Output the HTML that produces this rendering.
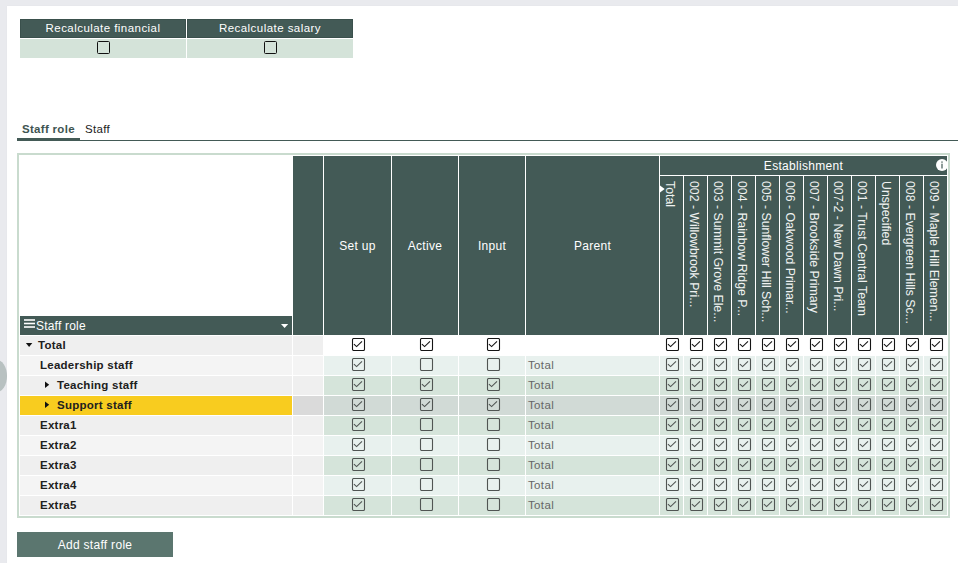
<!DOCTYPE html>
<html><head><meta charset="utf-8"><style>
*{box-sizing:border-box;margin:0;padding:0}
html,body{width:958px;height:563px;overflow:hidden;background:#e9eaee;font-family:"Liberation Sans",sans-serif}
.abs{position:absolute}
.page{position:absolute;left:7px;top:6px;width:951px;height:557px;background:#fff;box-shadow:0 0 1px rgba(0,0,0,0.06)}
.hd{position:absolute;background:#435a56;color:#fff;font-size:12px;letter-spacing:0.3px;text-align:center;white-space:nowrap}
.cb{position:absolute;width:13px;height:13px;border:1px solid #111;border-radius:1.5px}
.cbk{position:absolute;width:15px;height:13px}
.cell{position:absolute}
.lbl{position:absolute;font-size:11.5px;letter-spacing:0.25px;font-weight:bold;color:#202020;white-space:nowrap}
.vt{position:absolute;color:#f0f2f1;font-size:12.3px;white-space:nowrap;transform-origin:0 0;transform:rotate(90deg)}
</style></head><body>
<div class="abs" style="left:-13px;top:360px;width:20px;height:32px;border-radius:50%;background:#b8c1c1"></div>
<div class="page"></div>

<div class="hd" style="left:20px;top:19px;width:166px;height:19px;line-height:16px;font-size:11.5px;letter-spacing:0.45px;border:1px solid #3a504c">Recalculate financial</div>
<div class="hd" style="left:187px;top:19px;width:166px;height:19px;line-height:16px;font-size:11.5px;letter-spacing:0.45px;border:1px solid #3a504c">Recalculate salary</div>
<div class="cell" style="left:20px;top:39px;width:166px;height:19px;background:#d4e3d9"></div>
<div class="cell" style="left:187px;top:39px;width:166px;height:19px;background:#d4e3d9"></div>
<div class="cb" style="left:97px;top:41px"></div>
<div class="cb" style="left:264px;top:41px"></div>
<div class="abs" style="left:22px;top:123px;font-size:11.5px;letter-spacing:0.3px;font-weight:bold;color:#3e5451;white-space:nowrap">Staff role</div>
<div class="abs" style="left:85px;top:123px;font-size:11.5px;letter-spacing:0.3px;color:#222;white-space:nowrap">Staff</div>
<div class="abs" style="left:17px;top:140px;width:941px;height:1px;background:#435a56"></div>
<div class="abs" style="left:17px;top:138px;width:63px;height:3px;background:#435a56"></div>
<div class="abs" style="left:17px;top:153px;width:933px;height:365px;border:2px solid #c9dbce"></div>
<div class="hd" style="left:20px;top:316px;width:272px;height:19px;text-align:left"></div>
<svg class="abs" style="left:24px;top:318px" width="11" height="11"><rect x="0" y="1.2" width="11" height="1.6" fill="#fff"/><rect x="0" y="4.7" width="11" height="1.6" fill="#fff"/><rect x="0" y="8.2" width="11" height="1.6" fill="#fff"/></svg>
<div class="abs" style="left:36px;top:319px;font-size:12px;letter-spacing:0.2px;color:#fff;white-space:nowrap">Staff role</div>
<svg class="abs" style="left:281px;top:324px" width="8" height="5"><path d="M0 0 L7.2 0 L3.6 4 Z" fill="#fff"/></svg>
<div class="hd" style="left:293px;top:156px;width:30px;height:179px;line-height:180px"></div>
<div class="hd" style="left:324px;top:156px;width:67px;height:179px;line-height:180px">Set up</div>
<div class="hd" style="left:392px;top:156px;width:66px;height:179px;line-height:180px">Active</div>
<div class="hd" style="left:459px;top:156px;width:66px;height:179px;line-height:180px">Input</div>
<div class="hd" style="left:526px;top:156px;width:133px;height:179px;line-height:180px">Parent</div>
<div class="hd" style="left:660px;top:156px;width:287px;height:19px;line-height:21px">Establishment</div>
<div class="abs" style="left:660px;top:156px;width:287px;height:19px;overflow:hidden"><svg style="position:absolute;left:276px;top:3px" width="12" height="12" viewBox="0 0 12 12"><circle cx="6" cy="6" r="6" fill="#fff"/><rect x="5.4" y="2.4" width="1.2" height="1.4" fill="#435a56"/><rect x="5.4" y="4.7" width="1.2" height="4.8" fill="#435a56"/></svg></div>
<div class="hd" style="left:660px;top:176px;width:23px;height:159px"></div>
<div class="vt" style="left:676.5px;top:181px">Total</div>
<div class="hd" style="left:684px;top:176px;width:23px;height:159px"></div>
<div class="vt" style="left:700.5px;top:181px">002 - Willowbrook Pri...</div>
<div class="hd" style="left:708px;top:176px;width:23px;height:159px"></div>
<div class="vt" style="left:724.5px;top:181px">003 - Summit Grove Ele...</div>
<div class="hd" style="left:732px;top:176px;width:23px;height:159px"></div>
<div class="vt" style="left:748.5px;top:181px">004 - Rainbow Ridge P...</div>
<div class="hd" style="left:756px;top:176px;width:23px;height:159px"></div>
<div class="vt" style="left:772.5px;top:181px">005 - Sunflower Hill Sch...</div>
<div class="hd" style="left:780px;top:176px;width:23px;height:159px"></div>
<div class="vt" style="left:796.5px;top:181px">006 - Oakwood Primar...</div>
<div class="hd" style="left:804px;top:176px;width:23px;height:159px"></div>
<div class="vt" style="left:820.5px;top:181px">007 - Brookside Primary</div>
<div class="hd" style="left:828px;top:176px;width:23px;height:159px"></div>
<div class="vt" style="left:844.5px;top:181px">007-2 - New Dawn Pri...</div>
<div class="hd" style="left:852px;top:176px;width:23px;height:159px"></div>
<div class="vt" style="left:868.5px;top:181px">001 - Trust Central Team</div>
<div class="hd" style="left:876px;top:176px;width:23px;height:159px"></div>
<div class="vt" style="left:892.5px;top:181px">Unspecified</div>
<div class="hd" style="left:900px;top:176px;width:23px;height:159px"></div>
<div class="vt" style="left:916.5px;top:181px">008 - Evergreen Hills Sc...</div>
<div class="hd" style="left:924px;top:176px;width:23px;height:159px"></div>
<div class="vt" style="left:940.5px;top:181px">009 - Maple Hill Elemen...</div>
<svg class="abs" style="left:660px;top:185px" width="6" height="8"><path d="M0 0.6 L4.7 4 L0 7.4 Z" fill="#fff"/></svg>
<div class="cell" style="left:20px;top:336px;width:272px;height:19px;background:#efefef"></div>
<div class="cell" style="left:293px;top:336px;width:30px;height:19px;background:#efefef"></div>
<div class="cell" style="left:324px;top:336px;width:67px;height:19px;background:#fff"></div>
<div class="cell" style="left:392px;top:336px;width:66px;height:19px;background:#fff"></div>
<div class="cell" style="left:459px;top:336px;width:66px;height:19px;background:#fff"></div>
<div class="cell" style="left:526px;top:336px;width:133px;height:19px;background:#fff"></div>
<div class="cell" style="left:660px;top:336px;width:23px;height:19px;background:#fff"></div>
<div class="cell" style="left:684px;top:336px;width:23px;height:19px;background:#fff"></div>
<div class="cell" style="left:708px;top:336px;width:23px;height:19px;background:#fff"></div>
<div class="cell" style="left:732px;top:336px;width:23px;height:19px;background:#fff"></div>
<div class="cell" style="left:756px;top:336px;width:23px;height:19px;background:#fff"></div>
<div class="cell" style="left:780px;top:336px;width:23px;height:19px;background:#fff"></div>
<div class="cell" style="left:804px;top:336px;width:23px;height:19px;background:#fff"></div>
<div class="cell" style="left:828px;top:336px;width:23px;height:19px;background:#fff"></div>
<div class="cell" style="left:852px;top:336px;width:23px;height:19px;background:#fff"></div>
<div class="cell" style="left:876px;top:336px;width:23px;height:19px;background:#fff"></div>
<div class="cell" style="left:900px;top:336px;width:23px;height:19px;background:#fff"></div>
<div class="cell" style="left:924px;top:336px;width:23px;height:19px;background:#fff"></div>
<svg class="abs" style="left:25px;top:342px" width="8" height="6"><path d="M0.9 0.9 L7.3 0.9 L4.1 5.1 Z" fill="#111"/></svg>
<div class="lbl" style="left:38px;top:339px">Total</div>
<svg class="cbk" style="left:351px;top:338px" width="15" height="13" viewBox="0 0 15 13"><rect x="1.5" y="0.5" width="12" height="12" rx="1.2" fill="none" stroke="#141414" stroke-width="1.1"/><path d="M2.9 6.2 L5.6 8.6 L11 3.4" fill="none" stroke="#141414" stroke-width="1.1"/></svg>
<svg class="cbk" style="left:419px;top:338px" width="15" height="13" viewBox="0 0 15 13"><rect x="1.5" y="0.5" width="12" height="12" rx="1.2" fill="none" stroke="#141414" stroke-width="1.1"/><path d="M2.9 6.2 L5.6 8.6 L11 3.4" fill="none" stroke="#141414" stroke-width="1.1"/></svg>
<svg class="cbk" style="left:486px;top:338px" width="15" height="13" viewBox="0 0 15 13"><rect x="1.5" y="0.5" width="12" height="12" rx="1.2" fill="none" stroke="#141414" stroke-width="1.1"/><path d="M2.9 6.2 L5.6 8.6 L11 3.4" fill="none" stroke="#141414" stroke-width="1.1"/></svg>
<svg class="cbk" style="left:665px;top:338px" width="15" height="13" viewBox="0 0 15 13"><rect x="1.5" y="0.5" width="12" height="12" rx="1.2" fill="none" stroke="#141414" stroke-width="1.1"/><path d="M2.9 6.2 L5.6 8.6 L11 3.4" fill="none" stroke="#141414" stroke-width="1.1"/></svg>
<svg class="cbk" style="left:689px;top:338px" width="15" height="13" viewBox="0 0 15 13"><rect x="1.5" y="0.5" width="12" height="12" rx="1.2" fill="none" stroke="#141414" stroke-width="1.1"/><path d="M2.9 6.2 L5.6 8.6 L11 3.4" fill="none" stroke="#141414" stroke-width="1.1"/></svg>
<svg class="cbk" style="left:713px;top:338px" width="15" height="13" viewBox="0 0 15 13"><rect x="1.5" y="0.5" width="12" height="12" rx="1.2" fill="none" stroke="#141414" stroke-width="1.1"/><path d="M2.9 6.2 L5.6 8.6 L11 3.4" fill="none" stroke="#141414" stroke-width="1.1"/></svg>
<svg class="cbk" style="left:737px;top:338px" width="15" height="13" viewBox="0 0 15 13"><rect x="1.5" y="0.5" width="12" height="12" rx="1.2" fill="none" stroke="#141414" stroke-width="1.1"/><path d="M2.9 6.2 L5.6 8.6 L11 3.4" fill="none" stroke="#141414" stroke-width="1.1"/></svg>
<svg class="cbk" style="left:761px;top:338px" width="15" height="13" viewBox="0 0 15 13"><rect x="1.5" y="0.5" width="12" height="12" rx="1.2" fill="none" stroke="#141414" stroke-width="1.1"/><path d="M2.9 6.2 L5.6 8.6 L11 3.4" fill="none" stroke="#141414" stroke-width="1.1"/></svg>
<svg class="cbk" style="left:785px;top:338px" width="15" height="13" viewBox="0 0 15 13"><rect x="1.5" y="0.5" width="12" height="12" rx="1.2" fill="none" stroke="#141414" stroke-width="1.1"/><path d="M2.9 6.2 L5.6 8.6 L11 3.4" fill="none" stroke="#141414" stroke-width="1.1"/></svg>
<svg class="cbk" style="left:809px;top:338px" width="15" height="13" viewBox="0 0 15 13"><rect x="1.5" y="0.5" width="12" height="12" rx="1.2" fill="none" stroke="#141414" stroke-width="1.1"/><path d="M2.9 6.2 L5.6 8.6 L11 3.4" fill="none" stroke="#141414" stroke-width="1.1"/></svg>
<svg class="cbk" style="left:833px;top:338px" width="15" height="13" viewBox="0 0 15 13"><rect x="1.5" y="0.5" width="12" height="12" rx="1.2" fill="none" stroke="#141414" stroke-width="1.1"/><path d="M2.9 6.2 L5.6 8.6 L11 3.4" fill="none" stroke="#141414" stroke-width="1.1"/></svg>
<svg class="cbk" style="left:857px;top:338px" width="15" height="13" viewBox="0 0 15 13"><rect x="1.5" y="0.5" width="12" height="12" rx="1.2" fill="none" stroke="#141414" stroke-width="1.1"/><path d="M2.9 6.2 L5.6 8.6 L11 3.4" fill="none" stroke="#141414" stroke-width="1.1"/></svg>
<svg class="cbk" style="left:881px;top:338px" width="15" height="13" viewBox="0 0 15 13"><rect x="1.5" y="0.5" width="12" height="12" rx="1.2" fill="none" stroke="#141414" stroke-width="1.1"/><path d="M2.9 6.2 L5.6 8.6 L11 3.4" fill="none" stroke="#141414" stroke-width="1.1"/></svg>
<svg class="cbk" style="left:905px;top:338px" width="15" height="13" viewBox="0 0 15 13"><rect x="1.5" y="0.5" width="12" height="12" rx="1.2" fill="none" stroke="#141414" stroke-width="1.1"/><path d="M2.9 6.2 L5.6 8.6 L11 3.4" fill="none" stroke="#141414" stroke-width="1.1"/></svg>
<svg class="cbk" style="left:929px;top:338px" width="15" height="13" viewBox="0 0 15 13"><rect x="1.5" y="0.5" width="12" height="12" rx="1.2" fill="none" stroke="#141414" stroke-width="1.1"/><path d="M2.9 6.2 L5.6 8.6 L11 3.4" fill="none" stroke="#141414" stroke-width="1.1"/></svg>
<div class="cell" style="left:20px;top:356px;width:272px;height:19px;background:#f4f4f4"></div>
<div class="cell" style="left:293px;top:356px;width:30px;height:19px;background:#f4f4f4"></div>
<div class="cell" style="left:324px;top:356px;width:67px;height:19px;background:#e8f1ee"></div>
<div class="cell" style="left:392px;top:356px;width:66px;height:19px;background:#e8f1ee"></div>
<div class="cell" style="left:459px;top:356px;width:66px;height:19px;background:#e8f1ee"></div>
<div class="cell" style="left:526px;top:356px;width:133px;height:19px;background:#e8f1ee"></div>
<div class="cell" style="left:660px;top:356px;width:23px;height:19px;background:#e8f1ee"></div>
<div class="cell" style="left:684px;top:356px;width:23px;height:19px;background:#e8f1ee"></div>
<div class="cell" style="left:708px;top:356px;width:23px;height:19px;background:#e8f1ee"></div>
<div class="cell" style="left:732px;top:356px;width:23px;height:19px;background:#e8f1ee"></div>
<div class="cell" style="left:756px;top:356px;width:23px;height:19px;background:#e8f1ee"></div>
<div class="cell" style="left:780px;top:356px;width:23px;height:19px;background:#e8f1ee"></div>
<div class="cell" style="left:804px;top:356px;width:23px;height:19px;background:#e8f1ee"></div>
<div class="cell" style="left:828px;top:356px;width:23px;height:19px;background:#e8f1ee"></div>
<div class="cell" style="left:852px;top:356px;width:23px;height:19px;background:#e8f1ee"></div>
<div class="cell" style="left:876px;top:356px;width:23px;height:19px;background:#e8f1ee"></div>
<div class="cell" style="left:900px;top:356px;width:23px;height:19px;background:#e8f1ee"></div>
<div class="cell" style="left:924px;top:356px;width:23px;height:19px;background:#e8f1ee"></div>
<div class="lbl" style="left:40px;top:359px">Leadership staff</div>
<svg class="cbk" style="left:351px;top:358px" width="15" height="13" viewBox="0 0 15 13"><rect x="1.5" y="0.5" width="12" height="12" rx="1.2" fill="none" stroke="#505553" stroke-width="1.1"/><path d="M2.9 6.2 L5.6 8.6 L11 3.4" fill="none" stroke="#505553" stroke-width="1.1"/></svg>
<svg class="cbk" style="left:419px;top:358px" width="15" height="13" viewBox="0 0 15 13"><rect x="1.5" y="0.5" width="12" height="12" rx="1.2" fill="none" stroke="#505553" stroke-width="1.1"/></svg>
<svg class="cbk" style="left:486px;top:358px" width="15" height="13" viewBox="0 0 15 13"><rect x="1.5" y="0.5" width="12" height="12" rx="1.2" fill="none" stroke="#505553" stroke-width="1.1"/></svg>
<div class="abs" style="left:528px;top:359.0px;font-size:11.5px;letter-spacing:0.35px;color:#666;white-space:nowrap">Total</div>
<svg class="cbk" style="left:665px;top:358px" width="15" height="13" viewBox="0 0 15 13"><rect x="1.5" y="0.5" width="12" height="12" rx="1.2" fill="none" stroke="#505553" stroke-width="1.1"/><path d="M2.9 6.2 L5.6 8.6 L11 3.4" fill="none" stroke="#505553" stroke-width="1.1"/></svg>
<svg class="cbk" style="left:689px;top:358px" width="15" height="13" viewBox="0 0 15 13"><rect x="1.5" y="0.5" width="12" height="12" rx="1.2" fill="none" stroke="#505553" stroke-width="1.1"/><path d="M2.9 6.2 L5.6 8.6 L11 3.4" fill="none" stroke="#505553" stroke-width="1.1"/></svg>
<svg class="cbk" style="left:713px;top:358px" width="15" height="13" viewBox="0 0 15 13"><rect x="1.5" y="0.5" width="12" height="12" rx="1.2" fill="none" stroke="#505553" stroke-width="1.1"/><path d="M2.9 6.2 L5.6 8.6 L11 3.4" fill="none" stroke="#505553" stroke-width="1.1"/></svg>
<svg class="cbk" style="left:737px;top:358px" width="15" height="13" viewBox="0 0 15 13"><rect x="1.5" y="0.5" width="12" height="12" rx="1.2" fill="none" stroke="#505553" stroke-width="1.1"/><path d="M2.9 6.2 L5.6 8.6 L11 3.4" fill="none" stroke="#505553" stroke-width="1.1"/></svg>
<svg class="cbk" style="left:761px;top:358px" width="15" height="13" viewBox="0 0 15 13"><rect x="1.5" y="0.5" width="12" height="12" rx="1.2" fill="none" stroke="#505553" stroke-width="1.1"/><path d="M2.9 6.2 L5.6 8.6 L11 3.4" fill="none" stroke="#505553" stroke-width="1.1"/></svg>
<svg class="cbk" style="left:785px;top:358px" width="15" height="13" viewBox="0 0 15 13"><rect x="1.5" y="0.5" width="12" height="12" rx="1.2" fill="none" stroke="#505553" stroke-width="1.1"/><path d="M2.9 6.2 L5.6 8.6 L11 3.4" fill="none" stroke="#505553" stroke-width="1.1"/></svg>
<svg class="cbk" style="left:809px;top:358px" width="15" height="13" viewBox="0 0 15 13"><rect x="1.5" y="0.5" width="12" height="12" rx="1.2" fill="none" stroke="#505553" stroke-width="1.1"/><path d="M2.9 6.2 L5.6 8.6 L11 3.4" fill="none" stroke="#505553" stroke-width="1.1"/></svg>
<svg class="cbk" style="left:833px;top:358px" width="15" height="13" viewBox="0 0 15 13"><rect x="1.5" y="0.5" width="12" height="12" rx="1.2" fill="none" stroke="#505553" stroke-width="1.1"/><path d="M2.9 6.2 L5.6 8.6 L11 3.4" fill="none" stroke="#505553" stroke-width="1.1"/></svg>
<svg class="cbk" style="left:857px;top:358px" width="15" height="13" viewBox="0 0 15 13"><rect x="1.5" y="0.5" width="12" height="12" rx="1.2" fill="none" stroke="#505553" stroke-width="1.1"/><path d="M2.9 6.2 L5.6 8.6 L11 3.4" fill="none" stroke="#505553" stroke-width="1.1"/></svg>
<svg class="cbk" style="left:881px;top:358px" width="15" height="13" viewBox="0 0 15 13"><rect x="1.5" y="0.5" width="12" height="12" rx="1.2" fill="none" stroke="#505553" stroke-width="1.1"/><path d="M2.9 6.2 L5.6 8.6 L11 3.4" fill="none" stroke="#505553" stroke-width="1.1"/></svg>
<svg class="cbk" style="left:905px;top:358px" width="15" height="13" viewBox="0 0 15 13"><rect x="1.5" y="0.5" width="12" height="12" rx="1.2" fill="none" stroke="#505553" stroke-width="1.1"/><path d="M2.9 6.2 L5.6 8.6 L11 3.4" fill="none" stroke="#505553" stroke-width="1.1"/></svg>
<svg class="cbk" style="left:929px;top:358px" width="15" height="13" viewBox="0 0 15 13"><rect x="1.5" y="0.5" width="12" height="12" rx="1.2" fill="none" stroke="#505553" stroke-width="1.1"/><path d="M2.9 6.2 L5.6 8.6 L11 3.4" fill="none" stroke="#505553" stroke-width="1.1"/></svg>
<div class="cell" style="left:20px;top:376px;width:272px;height:19px;background:#efefef"></div>
<div class="cell" style="left:293px;top:376px;width:30px;height:19px;background:#efefef"></div>
<div class="cell" style="left:324px;top:376px;width:67px;height:19px;background:#d5e4da"></div>
<div class="cell" style="left:392px;top:376px;width:66px;height:19px;background:#d5e4da"></div>
<div class="cell" style="left:459px;top:376px;width:66px;height:19px;background:#d5e4da"></div>
<div class="cell" style="left:526px;top:376px;width:133px;height:19px;background:#d5e4da"></div>
<div class="cell" style="left:660px;top:376px;width:23px;height:19px;background:#d5e4da"></div>
<div class="cell" style="left:684px;top:376px;width:23px;height:19px;background:#d5e4da"></div>
<div class="cell" style="left:708px;top:376px;width:23px;height:19px;background:#d5e4da"></div>
<div class="cell" style="left:732px;top:376px;width:23px;height:19px;background:#d5e4da"></div>
<div class="cell" style="left:756px;top:376px;width:23px;height:19px;background:#d5e4da"></div>
<div class="cell" style="left:780px;top:376px;width:23px;height:19px;background:#d5e4da"></div>
<div class="cell" style="left:804px;top:376px;width:23px;height:19px;background:#d5e4da"></div>
<div class="cell" style="left:828px;top:376px;width:23px;height:19px;background:#d5e4da"></div>
<div class="cell" style="left:852px;top:376px;width:23px;height:19px;background:#d5e4da"></div>
<div class="cell" style="left:876px;top:376px;width:23px;height:19px;background:#d5e4da"></div>
<div class="cell" style="left:900px;top:376px;width:23px;height:19px;background:#d5e4da"></div>
<div class="cell" style="left:924px;top:376px;width:23px;height:19px;background:#d5e4da"></div>
<svg class="abs" style="left:44px;top:380px" width="7" height="8"><path d="M1 1.5 L5.2 4.75 L1 8 Z" fill="#111"/></svg>
<div class="lbl" style="left:57px;top:379px">Teaching staff</div>
<svg class="cbk" style="left:351px;top:378px" width="15" height="13" viewBox="0 0 15 13"><rect x="1.5" y="0.5" width="12" height="12" rx="1.2" fill="none" stroke="#505553" stroke-width="1.1"/><path d="M2.9 6.2 L5.6 8.6 L11 3.4" fill="none" stroke="#505553" stroke-width="1.1"/></svg>
<svg class="cbk" style="left:419px;top:378px" width="15" height="13" viewBox="0 0 15 13"><rect x="1.5" y="0.5" width="12" height="12" rx="1.2" fill="none" stroke="#505553" stroke-width="1.1"/><path d="M2.9 6.2 L5.6 8.6 L11 3.4" fill="none" stroke="#505553" stroke-width="1.1"/></svg>
<svg class="cbk" style="left:486px;top:378px" width="15" height="13" viewBox="0 0 15 13"><rect x="1.5" y="0.5" width="12" height="12" rx="1.2" fill="none" stroke="#505553" stroke-width="1.1"/><path d="M2.9 6.2 L5.6 8.6 L11 3.4" fill="none" stroke="#505553" stroke-width="1.1"/></svg>
<div class="abs" style="left:528px;top:379.0px;font-size:11.5px;letter-spacing:0.35px;color:#666;white-space:nowrap">Total</div>
<svg class="cbk" style="left:665px;top:378px" width="15" height="13" viewBox="0 0 15 13"><rect x="1.5" y="0.5" width="12" height="12" rx="1.2" fill="none" stroke="#505553" stroke-width="1.1"/><path d="M2.9 6.2 L5.6 8.6 L11 3.4" fill="none" stroke="#505553" stroke-width="1.1"/></svg>
<svg class="cbk" style="left:689px;top:378px" width="15" height="13" viewBox="0 0 15 13"><rect x="1.5" y="0.5" width="12" height="12" rx="1.2" fill="none" stroke="#505553" stroke-width="1.1"/><path d="M2.9 6.2 L5.6 8.6 L11 3.4" fill="none" stroke="#505553" stroke-width="1.1"/></svg>
<svg class="cbk" style="left:713px;top:378px" width="15" height="13" viewBox="0 0 15 13"><rect x="1.5" y="0.5" width="12" height="12" rx="1.2" fill="none" stroke="#505553" stroke-width="1.1"/><path d="M2.9 6.2 L5.6 8.6 L11 3.4" fill="none" stroke="#505553" stroke-width="1.1"/></svg>
<svg class="cbk" style="left:737px;top:378px" width="15" height="13" viewBox="0 0 15 13"><rect x="1.5" y="0.5" width="12" height="12" rx="1.2" fill="none" stroke="#505553" stroke-width="1.1"/><path d="M2.9 6.2 L5.6 8.6 L11 3.4" fill="none" stroke="#505553" stroke-width="1.1"/></svg>
<svg class="cbk" style="left:761px;top:378px" width="15" height="13" viewBox="0 0 15 13"><rect x="1.5" y="0.5" width="12" height="12" rx="1.2" fill="none" stroke="#505553" stroke-width="1.1"/><path d="M2.9 6.2 L5.6 8.6 L11 3.4" fill="none" stroke="#505553" stroke-width="1.1"/></svg>
<svg class="cbk" style="left:785px;top:378px" width="15" height="13" viewBox="0 0 15 13"><rect x="1.5" y="0.5" width="12" height="12" rx="1.2" fill="none" stroke="#505553" stroke-width="1.1"/><path d="M2.9 6.2 L5.6 8.6 L11 3.4" fill="none" stroke="#505553" stroke-width="1.1"/></svg>
<svg class="cbk" style="left:809px;top:378px" width="15" height="13" viewBox="0 0 15 13"><rect x="1.5" y="0.5" width="12" height="12" rx="1.2" fill="none" stroke="#505553" stroke-width="1.1"/><path d="M2.9 6.2 L5.6 8.6 L11 3.4" fill="none" stroke="#505553" stroke-width="1.1"/></svg>
<svg class="cbk" style="left:833px;top:378px" width="15" height="13" viewBox="0 0 15 13"><rect x="1.5" y="0.5" width="12" height="12" rx="1.2" fill="none" stroke="#505553" stroke-width="1.1"/><path d="M2.9 6.2 L5.6 8.6 L11 3.4" fill="none" stroke="#505553" stroke-width="1.1"/></svg>
<svg class="cbk" style="left:857px;top:378px" width="15" height="13" viewBox="0 0 15 13"><rect x="1.5" y="0.5" width="12" height="12" rx="1.2" fill="none" stroke="#505553" stroke-width="1.1"/><path d="M2.9 6.2 L5.6 8.6 L11 3.4" fill="none" stroke="#505553" stroke-width="1.1"/></svg>
<svg class="cbk" style="left:881px;top:378px" width="15" height="13" viewBox="0 0 15 13"><rect x="1.5" y="0.5" width="12" height="12" rx="1.2" fill="none" stroke="#505553" stroke-width="1.1"/><path d="M2.9 6.2 L5.6 8.6 L11 3.4" fill="none" stroke="#505553" stroke-width="1.1"/></svg>
<svg class="cbk" style="left:905px;top:378px" width="15" height="13" viewBox="0 0 15 13"><rect x="1.5" y="0.5" width="12" height="12" rx="1.2" fill="none" stroke="#505553" stroke-width="1.1"/><path d="M2.9 6.2 L5.6 8.6 L11 3.4" fill="none" stroke="#505553" stroke-width="1.1"/></svg>
<svg class="cbk" style="left:929px;top:378px" width="15" height="13" viewBox="0 0 15 13"><rect x="1.5" y="0.5" width="12" height="12" rx="1.2" fill="none" stroke="#505553" stroke-width="1.1"/><path d="M2.9 6.2 L5.6 8.6 L11 3.4" fill="none" stroke="#505553" stroke-width="1.1"/></svg>
<div class="cell" style="left:20px;top:396px;width:272px;height:19px;background:#f8cc1f"></div>
<div class="cell" style="left:293px;top:396px;width:30px;height:19px;background:#dadada"></div>
<div class="cell" style="left:324px;top:396px;width:67px;height:19px;background:#d1dad6"></div>
<div class="cell" style="left:392px;top:396px;width:66px;height:19px;background:#d1dad6"></div>
<div class="cell" style="left:459px;top:396px;width:66px;height:19px;background:#d1dad6"></div>
<div class="cell" style="left:526px;top:396px;width:133px;height:19px;background:#d1dad6"></div>
<div class="cell" style="left:660px;top:396px;width:23px;height:19px;background:#d1dad6"></div>
<div class="cell" style="left:684px;top:396px;width:23px;height:19px;background:#d1dad6"></div>
<div class="cell" style="left:708px;top:396px;width:23px;height:19px;background:#d1dad6"></div>
<div class="cell" style="left:732px;top:396px;width:23px;height:19px;background:#d1dad6"></div>
<div class="cell" style="left:756px;top:396px;width:23px;height:19px;background:#d1dad6"></div>
<div class="cell" style="left:780px;top:396px;width:23px;height:19px;background:#d1dad6"></div>
<div class="cell" style="left:804px;top:396px;width:23px;height:19px;background:#d1dad6"></div>
<div class="cell" style="left:828px;top:396px;width:23px;height:19px;background:#d1dad6"></div>
<div class="cell" style="left:852px;top:396px;width:23px;height:19px;background:#d1dad6"></div>
<div class="cell" style="left:876px;top:396px;width:23px;height:19px;background:#d1dad6"></div>
<div class="cell" style="left:900px;top:396px;width:23px;height:19px;background:#d1dad6"></div>
<div class="cell" style="left:924px;top:396px;width:23px;height:19px;background:#d1dad6"></div>
<svg class="abs" style="left:44px;top:400px" width="7" height="8"><path d="M1 1.5 L5.2 4.75 L1 8 Z" fill="#111"/></svg>
<div class="lbl" style="left:57px;top:399px">Support staff</div>
<svg class="cbk" style="left:351px;top:398px" width="15" height="13" viewBox="0 0 15 13"><rect x="1.5" y="0.5" width="12" height="12" rx="1.2" fill="none" stroke="#505553" stroke-width="1.1"/><path d="M2.9 6.2 L5.6 8.6 L11 3.4" fill="none" stroke="#505553" stroke-width="1.1"/></svg>
<svg class="cbk" style="left:419px;top:398px" width="15" height="13" viewBox="0 0 15 13"><rect x="1.5" y="0.5" width="12" height="12" rx="1.2" fill="none" stroke="#505553" stroke-width="1.1"/><path d="M2.9 6.2 L5.6 8.6 L11 3.4" fill="none" stroke="#505553" stroke-width="1.1"/></svg>
<svg class="cbk" style="left:486px;top:398px" width="15" height="13" viewBox="0 0 15 13"><rect x="1.5" y="0.5" width="12" height="12" rx="1.2" fill="none" stroke="#505553" stroke-width="1.1"/><path d="M2.9 6.2 L5.6 8.6 L11 3.4" fill="none" stroke="#505553" stroke-width="1.1"/></svg>
<div class="abs" style="left:528px;top:399.0px;font-size:11.5px;letter-spacing:0.35px;color:#666;white-space:nowrap">Total</div>
<svg class="cbk" style="left:665px;top:398px" width="15" height="13" viewBox="0 0 15 13"><rect x="1.5" y="0.5" width="12" height="12" rx="1.2" fill="none" stroke="#505553" stroke-width="1.1"/><path d="M2.9 6.2 L5.6 8.6 L11 3.4" fill="none" stroke="#505553" stroke-width="1.1"/></svg>
<svg class="cbk" style="left:689px;top:398px" width="15" height="13" viewBox="0 0 15 13"><rect x="1.5" y="0.5" width="12" height="12" rx="1.2" fill="none" stroke="#505553" stroke-width="1.1"/><path d="M2.9 6.2 L5.6 8.6 L11 3.4" fill="none" stroke="#505553" stroke-width="1.1"/></svg>
<svg class="cbk" style="left:713px;top:398px" width="15" height="13" viewBox="0 0 15 13"><rect x="1.5" y="0.5" width="12" height="12" rx="1.2" fill="none" stroke="#505553" stroke-width="1.1"/><path d="M2.9 6.2 L5.6 8.6 L11 3.4" fill="none" stroke="#505553" stroke-width="1.1"/></svg>
<svg class="cbk" style="left:737px;top:398px" width="15" height="13" viewBox="0 0 15 13"><rect x="1.5" y="0.5" width="12" height="12" rx="1.2" fill="none" stroke="#505553" stroke-width="1.1"/><path d="M2.9 6.2 L5.6 8.6 L11 3.4" fill="none" stroke="#505553" stroke-width="1.1"/></svg>
<svg class="cbk" style="left:761px;top:398px" width="15" height="13" viewBox="0 0 15 13"><rect x="1.5" y="0.5" width="12" height="12" rx="1.2" fill="none" stroke="#505553" stroke-width="1.1"/><path d="M2.9 6.2 L5.6 8.6 L11 3.4" fill="none" stroke="#505553" stroke-width="1.1"/></svg>
<svg class="cbk" style="left:785px;top:398px" width="15" height="13" viewBox="0 0 15 13"><rect x="1.5" y="0.5" width="12" height="12" rx="1.2" fill="none" stroke="#505553" stroke-width="1.1"/><path d="M2.9 6.2 L5.6 8.6 L11 3.4" fill="none" stroke="#505553" stroke-width="1.1"/></svg>
<svg class="cbk" style="left:809px;top:398px" width="15" height="13" viewBox="0 0 15 13"><rect x="1.5" y="0.5" width="12" height="12" rx="1.2" fill="none" stroke="#505553" stroke-width="1.1"/><path d="M2.9 6.2 L5.6 8.6 L11 3.4" fill="none" stroke="#505553" stroke-width="1.1"/></svg>
<svg class="cbk" style="left:833px;top:398px" width="15" height="13" viewBox="0 0 15 13"><rect x="1.5" y="0.5" width="12" height="12" rx="1.2" fill="none" stroke="#505553" stroke-width="1.1"/><path d="M2.9 6.2 L5.6 8.6 L11 3.4" fill="none" stroke="#505553" stroke-width="1.1"/></svg>
<svg class="cbk" style="left:857px;top:398px" width="15" height="13" viewBox="0 0 15 13"><rect x="1.5" y="0.5" width="12" height="12" rx="1.2" fill="none" stroke="#505553" stroke-width="1.1"/><path d="M2.9 6.2 L5.6 8.6 L11 3.4" fill="none" stroke="#505553" stroke-width="1.1"/></svg>
<svg class="cbk" style="left:881px;top:398px" width="15" height="13" viewBox="0 0 15 13"><rect x="1.5" y="0.5" width="12" height="12" rx="1.2" fill="none" stroke="#505553" stroke-width="1.1"/><path d="M2.9 6.2 L5.6 8.6 L11 3.4" fill="none" stroke="#505553" stroke-width="1.1"/></svg>
<svg class="cbk" style="left:905px;top:398px" width="15" height="13" viewBox="0 0 15 13"><rect x="1.5" y="0.5" width="12" height="12" rx="1.2" fill="none" stroke="#505553" stroke-width="1.1"/><path d="M2.9 6.2 L5.6 8.6 L11 3.4" fill="none" stroke="#505553" stroke-width="1.1"/></svg>
<svg class="cbk" style="left:929px;top:398px" width="15" height="13" viewBox="0 0 15 13"><rect x="1.5" y="0.5" width="12" height="12" rx="1.2" fill="none" stroke="#505553" stroke-width="1.1"/><path d="M2.9 6.2 L5.6 8.6 L11 3.4" fill="none" stroke="#505553" stroke-width="1.1"/></svg>
<div class="cell" style="left:20px;top:416px;width:272px;height:19px;background:#efefef"></div>
<div class="cell" style="left:293px;top:416px;width:30px;height:19px;background:#efefef"></div>
<div class="cell" style="left:324px;top:416px;width:67px;height:19px;background:#d5e4da"></div>
<div class="cell" style="left:392px;top:416px;width:66px;height:19px;background:#d5e4da"></div>
<div class="cell" style="left:459px;top:416px;width:66px;height:19px;background:#d5e4da"></div>
<div class="cell" style="left:526px;top:416px;width:133px;height:19px;background:#d5e4da"></div>
<div class="cell" style="left:660px;top:416px;width:23px;height:19px;background:#d5e4da"></div>
<div class="cell" style="left:684px;top:416px;width:23px;height:19px;background:#d5e4da"></div>
<div class="cell" style="left:708px;top:416px;width:23px;height:19px;background:#d5e4da"></div>
<div class="cell" style="left:732px;top:416px;width:23px;height:19px;background:#d5e4da"></div>
<div class="cell" style="left:756px;top:416px;width:23px;height:19px;background:#d5e4da"></div>
<div class="cell" style="left:780px;top:416px;width:23px;height:19px;background:#d5e4da"></div>
<div class="cell" style="left:804px;top:416px;width:23px;height:19px;background:#d5e4da"></div>
<div class="cell" style="left:828px;top:416px;width:23px;height:19px;background:#d5e4da"></div>
<div class="cell" style="left:852px;top:416px;width:23px;height:19px;background:#d5e4da"></div>
<div class="cell" style="left:876px;top:416px;width:23px;height:19px;background:#d5e4da"></div>
<div class="cell" style="left:900px;top:416px;width:23px;height:19px;background:#d5e4da"></div>
<div class="cell" style="left:924px;top:416px;width:23px;height:19px;background:#d5e4da"></div>
<div class="lbl" style="left:40px;top:419px">Extra1</div>
<svg class="cbk" style="left:351px;top:418px" width="15" height="13" viewBox="0 0 15 13"><rect x="1.5" y="0.5" width="12" height="12" rx="1.2" fill="none" stroke="#505553" stroke-width="1.1"/><path d="M2.9 6.2 L5.6 8.6 L11 3.4" fill="none" stroke="#505553" stroke-width="1.1"/></svg>
<svg class="cbk" style="left:419px;top:418px" width="15" height="13" viewBox="0 0 15 13"><rect x="1.5" y="0.5" width="12" height="12" rx="1.2" fill="none" stroke="#505553" stroke-width="1.1"/></svg>
<svg class="cbk" style="left:486px;top:418px" width="15" height="13" viewBox="0 0 15 13"><rect x="1.5" y="0.5" width="12" height="12" rx="1.2" fill="none" stroke="#505553" stroke-width="1.1"/></svg>
<div class="abs" style="left:528px;top:419.0px;font-size:11.5px;letter-spacing:0.35px;color:#666;white-space:nowrap">Total</div>
<svg class="cbk" style="left:665px;top:418px" width="15" height="13" viewBox="0 0 15 13"><rect x="1.5" y="0.5" width="12" height="12" rx="1.2" fill="none" stroke="#505553" stroke-width="1.1"/><path d="M2.9 6.2 L5.6 8.6 L11 3.4" fill="none" stroke="#505553" stroke-width="1.1"/></svg>
<svg class="cbk" style="left:689px;top:418px" width="15" height="13" viewBox="0 0 15 13"><rect x="1.5" y="0.5" width="12" height="12" rx="1.2" fill="none" stroke="#505553" stroke-width="1.1"/><path d="M2.9 6.2 L5.6 8.6 L11 3.4" fill="none" stroke="#505553" stroke-width="1.1"/></svg>
<svg class="cbk" style="left:713px;top:418px" width="15" height="13" viewBox="0 0 15 13"><rect x="1.5" y="0.5" width="12" height="12" rx="1.2" fill="none" stroke="#505553" stroke-width="1.1"/><path d="M2.9 6.2 L5.6 8.6 L11 3.4" fill="none" stroke="#505553" stroke-width="1.1"/></svg>
<svg class="cbk" style="left:737px;top:418px" width="15" height="13" viewBox="0 0 15 13"><rect x="1.5" y="0.5" width="12" height="12" rx="1.2" fill="none" stroke="#505553" stroke-width="1.1"/><path d="M2.9 6.2 L5.6 8.6 L11 3.4" fill="none" stroke="#505553" stroke-width="1.1"/></svg>
<svg class="cbk" style="left:761px;top:418px" width="15" height="13" viewBox="0 0 15 13"><rect x="1.5" y="0.5" width="12" height="12" rx="1.2" fill="none" stroke="#505553" stroke-width="1.1"/><path d="M2.9 6.2 L5.6 8.6 L11 3.4" fill="none" stroke="#505553" stroke-width="1.1"/></svg>
<svg class="cbk" style="left:785px;top:418px" width="15" height="13" viewBox="0 0 15 13"><rect x="1.5" y="0.5" width="12" height="12" rx="1.2" fill="none" stroke="#505553" stroke-width="1.1"/><path d="M2.9 6.2 L5.6 8.6 L11 3.4" fill="none" stroke="#505553" stroke-width="1.1"/></svg>
<svg class="cbk" style="left:809px;top:418px" width="15" height="13" viewBox="0 0 15 13"><rect x="1.5" y="0.5" width="12" height="12" rx="1.2" fill="none" stroke="#505553" stroke-width="1.1"/><path d="M2.9 6.2 L5.6 8.6 L11 3.4" fill="none" stroke="#505553" stroke-width="1.1"/></svg>
<svg class="cbk" style="left:833px;top:418px" width="15" height="13" viewBox="0 0 15 13"><rect x="1.5" y="0.5" width="12" height="12" rx="1.2" fill="none" stroke="#505553" stroke-width="1.1"/><path d="M2.9 6.2 L5.6 8.6 L11 3.4" fill="none" stroke="#505553" stroke-width="1.1"/></svg>
<svg class="cbk" style="left:857px;top:418px" width="15" height="13" viewBox="0 0 15 13"><rect x="1.5" y="0.5" width="12" height="12" rx="1.2" fill="none" stroke="#505553" stroke-width="1.1"/><path d="M2.9 6.2 L5.6 8.6 L11 3.4" fill="none" stroke="#505553" stroke-width="1.1"/></svg>
<svg class="cbk" style="left:881px;top:418px" width="15" height="13" viewBox="0 0 15 13"><rect x="1.5" y="0.5" width="12" height="12" rx="1.2" fill="none" stroke="#505553" stroke-width="1.1"/><path d="M2.9 6.2 L5.6 8.6 L11 3.4" fill="none" stroke="#505553" stroke-width="1.1"/></svg>
<svg class="cbk" style="left:905px;top:418px" width="15" height="13" viewBox="0 0 15 13"><rect x="1.5" y="0.5" width="12" height="12" rx="1.2" fill="none" stroke="#505553" stroke-width="1.1"/><path d="M2.9 6.2 L5.6 8.6 L11 3.4" fill="none" stroke="#505553" stroke-width="1.1"/></svg>
<svg class="cbk" style="left:929px;top:418px" width="15" height="13" viewBox="0 0 15 13"><rect x="1.5" y="0.5" width="12" height="12" rx="1.2" fill="none" stroke="#505553" stroke-width="1.1"/><path d="M2.9 6.2 L5.6 8.6 L11 3.4" fill="none" stroke="#505553" stroke-width="1.1"/></svg>
<div class="cell" style="left:20px;top:436px;width:272px;height:19px;background:#f4f4f4"></div>
<div class="cell" style="left:293px;top:436px;width:30px;height:19px;background:#f4f4f4"></div>
<div class="cell" style="left:324px;top:436px;width:67px;height:19px;background:#e8f1ee"></div>
<div class="cell" style="left:392px;top:436px;width:66px;height:19px;background:#e8f1ee"></div>
<div class="cell" style="left:459px;top:436px;width:66px;height:19px;background:#e8f1ee"></div>
<div class="cell" style="left:526px;top:436px;width:133px;height:19px;background:#e8f1ee"></div>
<div class="cell" style="left:660px;top:436px;width:23px;height:19px;background:#e8f1ee"></div>
<div class="cell" style="left:684px;top:436px;width:23px;height:19px;background:#e8f1ee"></div>
<div class="cell" style="left:708px;top:436px;width:23px;height:19px;background:#e8f1ee"></div>
<div class="cell" style="left:732px;top:436px;width:23px;height:19px;background:#e8f1ee"></div>
<div class="cell" style="left:756px;top:436px;width:23px;height:19px;background:#e8f1ee"></div>
<div class="cell" style="left:780px;top:436px;width:23px;height:19px;background:#e8f1ee"></div>
<div class="cell" style="left:804px;top:436px;width:23px;height:19px;background:#e8f1ee"></div>
<div class="cell" style="left:828px;top:436px;width:23px;height:19px;background:#e8f1ee"></div>
<div class="cell" style="left:852px;top:436px;width:23px;height:19px;background:#e8f1ee"></div>
<div class="cell" style="left:876px;top:436px;width:23px;height:19px;background:#e8f1ee"></div>
<div class="cell" style="left:900px;top:436px;width:23px;height:19px;background:#e8f1ee"></div>
<div class="cell" style="left:924px;top:436px;width:23px;height:19px;background:#e8f1ee"></div>
<div class="lbl" style="left:40px;top:439px">Extra2</div>
<svg class="cbk" style="left:351px;top:438px" width="15" height="13" viewBox="0 0 15 13"><rect x="1.5" y="0.5" width="12" height="12" rx="1.2" fill="none" stroke="#505553" stroke-width="1.1"/><path d="M2.9 6.2 L5.6 8.6 L11 3.4" fill="none" stroke="#505553" stroke-width="1.1"/></svg>
<svg class="cbk" style="left:419px;top:438px" width="15" height="13" viewBox="0 0 15 13"><rect x="1.5" y="0.5" width="12" height="12" rx="1.2" fill="none" stroke="#505553" stroke-width="1.1"/></svg>
<svg class="cbk" style="left:486px;top:438px" width="15" height="13" viewBox="0 0 15 13"><rect x="1.5" y="0.5" width="12" height="12" rx="1.2" fill="none" stroke="#505553" stroke-width="1.1"/></svg>
<div class="abs" style="left:528px;top:439.0px;font-size:11.5px;letter-spacing:0.35px;color:#666;white-space:nowrap">Total</div>
<svg class="cbk" style="left:665px;top:438px" width="15" height="13" viewBox="0 0 15 13"><rect x="1.5" y="0.5" width="12" height="12" rx="1.2" fill="none" stroke="#505553" stroke-width="1.1"/><path d="M2.9 6.2 L5.6 8.6 L11 3.4" fill="none" stroke="#505553" stroke-width="1.1"/></svg>
<svg class="cbk" style="left:689px;top:438px" width="15" height="13" viewBox="0 0 15 13"><rect x="1.5" y="0.5" width="12" height="12" rx="1.2" fill="none" stroke="#505553" stroke-width="1.1"/><path d="M2.9 6.2 L5.6 8.6 L11 3.4" fill="none" stroke="#505553" stroke-width="1.1"/></svg>
<svg class="cbk" style="left:713px;top:438px" width="15" height="13" viewBox="0 0 15 13"><rect x="1.5" y="0.5" width="12" height="12" rx="1.2" fill="none" stroke="#505553" stroke-width="1.1"/><path d="M2.9 6.2 L5.6 8.6 L11 3.4" fill="none" stroke="#505553" stroke-width="1.1"/></svg>
<svg class="cbk" style="left:737px;top:438px" width="15" height="13" viewBox="0 0 15 13"><rect x="1.5" y="0.5" width="12" height="12" rx="1.2" fill="none" stroke="#505553" stroke-width="1.1"/><path d="M2.9 6.2 L5.6 8.6 L11 3.4" fill="none" stroke="#505553" stroke-width="1.1"/></svg>
<svg class="cbk" style="left:761px;top:438px" width="15" height="13" viewBox="0 0 15 13"><rect x="1.5" y="0.5" width="12" height="12" rx="1.2" fill="none" stroke="#505553" stroke-width="1.1"/><path d="M2.9 6.2 L5.6 8.6 L11 3.4" fill="none" stroke="#505553" stroke-width="1.1"/></svg>
<svg class="cbk" style="left:785px;top:438px" width="15" height="13" viewBox="0 0 15 13"><rect x="1.5" y="0.5" width="12" height="12" rx="1.2" fill="none" stroke="#505553" stroke-width="1.1"/><path d="M2.9 6.2 L5.6 8.6 L11 3.4" fill="none" stroke="#505553" stroke-width="1.1"/></svg>
<svg class="cbk" style="left:809px;top:438px" width="15" height="13" viewBox="0 0 15 13"><rect x="1.5" y="0.5" width="12" height="12" rx="1.2" fill="none" stroke="#505553" stroke-width="1.1"/><path d="M2.9 6.2 L5.6 8.6 L11 3.4" fill="none" stroke="#505553" stroke-width="1.1"/></svg>
<svg class="cbk" style="left:833px;top:438px" width="15" height="13" viewBox="0 0 15 13"><rect x="1.5" y="0.5" width="12" height="12" rx="1.2" fill="none" stroke="#505553" stroke-width="1.1"/><path d="M2.9 6.2 L5.6 8.6 L11 3.4" fill="none" stroke="#505553" stroke-width="1.1"/></svg>
<svg class="cbk" style="left:857px;top:438px" width="15" height="13" viewBox="0 0 15 13"><rect x="1.5" y="0.5" width="12" height="12" rx="1.2" fill="none" stroke="#505553" stroke-width="1.1"/><path d="M2.9 6.2 L5.6 8.6 L11 3.4" fill="none" stroke="#505553" stroke-width="1.1"/></svg>
<svg class="cbk" style="left:881px;top:438px" width="15" height="13" viewBox="0 0 15 13"><rect x="1.5" y="0.5" width="12" height="12" rx="1.2" fill="none" stroke="#505553" stroke-width="1.1"/><path d="M2.9 6.2 L5.6 8.6 L11 3.4" fill="none" stroke="#505553" stroke-width="1.1"/></svg>
<svg class="cbk" style="left:905px;top:438px" width="15" height="13" viewBox="0 0 15 13"><rect x="1.5" y="0.5" width="12" height="12" rx="1.2" fill="none" stroke="#505553" stroke-width="1.1"/><path d="M2.9 6.2 L5.6 8.6 L11 3.4" fill="none" stroke="#505553" stroke-width="1.1"/></svg>
<svg class="cbk" style="left:929px;top:438px" width="15" height="13" viewBox="0 0 15 13"><rect x="1.5" y="0.5" width="12" height="12" rx="1.2" fill="none" stroke="#505553" stroke-width="1.1"/><path d="M2.9 6.2 L5.6 8.6 L11 3.4" fill="none" stroke="#505553" stroke-width="1.1"/></svg>
<div class="cell" style="left:20px;top:456px;width:272px;height:19px;background:#efefef"></div>
<div class="cell" style="left:293px;top:456px;width:30px;height:19px;background:#efefef"></div>
<div class="cell" style="left:324px;top:456px;width:67px;height:19px;background:#d5e4da"></div>
<div class="cell" style="left:392px;top:456px;width:66px;height:19px;background:#d5e4da"></div>
<div class="cell" style="left:459px;top:456px;width:66px;height:19px;background:#d5e4da"></div>
<div class="cell" style="left:526px;top:456px;width:133px;height:19px;background:#d5e4da"></div>
<div class="cell" style="left:660px;top:456px;width:23px;height:19px;background:#d5e4da"></div>
<div class="cell" style="left:684px;top:456px;width:23px;height:19px;background:#d5e4da"></div>
<div class="cell" style="left:708px;top:456px;width:23px;height:19px;background:#d5e4da"></div>
<div class="cell" style="left:732px;top:456px;width:23px;height:19px;background:#d5e4da"></div>
<div class="cell" style="left:756px;top:456px;width:23px;height:19px;background:#d5e4da"></div>
<div class="cell" style="left:780px;top:456px;width:23px;height:19px;background:#d5e4da"></div>
<div class="cell" style="left:804px;top:456px;width:23px;height:19px;background:#d5e4da"></div>
<div class="cell" style="left:828px;top:456px;width:23px;height:19px;background:#d5e4da"></div>
<div class="cell" style="left:852px;top:456px;width:23px;height:19px;background:#d5e4da"></div>
<div class="cell" style="left:876px;top:456px;width:23px;height:19px;background:#d5e4da"></div>
<div class="cell" style="left:900px;top:456px;width:23px;height:19px;background:#d5e4da"></div>
<div class="cell" style="left:924px;top:456px;width:23px;height:19px;background:#d5e4da"></div>
<div class="lbl" style="left:40px;top:459px">Extra3</div>
<svg class="cbk" style="left:351px;top:458px" width="15" height="13" viewBox="0 0 15 13"><rect x="1.5" y="0.5" width="12" height="12" rx="1.2" fill="none" stroke="#505553" stroke-width="1.1"/><path d="M2.9 6.2 L5.6 8.6 L11 3.4" fill="none" stroke="#505553" stroke-width="1.1"/></svg>
<svg class="cbk" style="left:419px;top:458px" width="15" height="13" viewBox="0 0 15 13"><rect x="1.5" y="0.5" width="12" height="12" rx="1.2" fill="none" stroke="#505553" stroke-width="1.1"/></svg>
<svg class="cbk" style="left:486px;top:458px" width="15" height="13" viewBox="0 0 15 13"><rect x="1.5" y="0.5" width="12" height="12" rx="1.2" fill="none" stroke="#505553" stroke-width="1.1"/></svg>
<div class="abs" style="left:528px;top:459.0px;font-size:11.5px;letter-spacing:0.35px;color:#666;white-space:nowrap">Total</div>
<svg class="cbk" style="left:665px;top:458px" width="15" height="13" viewBox="0 0 15 13"><rect x="1.5" y="0.5" width="12" height="12" rx="1.2" fill="none" stroke="#505553" stroke-width="1.1"/><path d="M2.9 6.2 L5.6 8.6 L11 3.4" fill="none" stroke="#505553" stroke-width="1.1"/></svg>
<svg class="cbk" style="left:689px;top:458px" width="15" height="13" viewBox="0 0 15 13"><rect x="1.5" y="0.5" width="12" height="12" rx="1.2" fill="none" stroke="#505553" stroke-width="1.1"/><path d="M2.9 6.2 L5.6 8.6 L11 3.4" fill="none" stroke="#505553" stroke-width="1.1"/></svg>
<svg class="cbk" style="left:713px;top:458px" width="15" height="13" viewBox="0 0 15 13"><rect x="1.5" y="0.5" width="12" height="12" rx="1.2" fill="none" stroke="#505553" stroke-width="1.1"/><path d="M2.9 6.2 L5.6 8.6 L11 3.4" fill="none" stroke="#505553" stroke-width="1.1"/></svg>
<svg class="cbk" style="left:737px;top:458px" width="15" height="13" viewBox="0 0 15 13"><rect x="1.5" y="0.5" width="12" height="12" rx="1.2" fill="none" stroke="#505553" stroke-width="1.1"/><path d="M2.9 6.2 L5.6 8.6 L11 3.4" fill="none" stroke="#505553" stroke-width="1.1"/></svg>
<svg class="cbk" style="left:761px;top:458px" width="15" height="13" viewBox="0 0 15 13"><rect x="1.5" y="0.5" width="12" height="12" rx="1.2" fill="none" stroke="#505553" stroke-width="1.1"/><path d="M2.9 6.2 L5.6 8.6 L11 3.4" fill="none" stroke="#505553" stroke-width="1.1"/></svg>
<svg class="cbk" style="left:785px;top:458px" width="15" height="13" viewBox="0 0 15 13"><rect x="1.5" y="0.5" width="12" height="12" rx="1.2" fill="none" stroke="#505553" stroke-width="1.1"/><path d="M2.9 6.2 L5.6 8.6 L11 3.4" fill="none" stroke="#505553" stroke-width="1.1"/></svg>
<svg class="cbk" style="left:809px;top:458px" width="15" height="13" viewBox="0 0 15 13"><rect x="1.5" y="0.5" width="12" height="12" rx="1.2" fill="none" stroke="#505553" stroke-width="1.1"/><path d="M2.9 6.2 L5.6 8.6 L11 3.4" fill="none" stroke="#505553" stroke-width="1.1"/></svg>
<svg class="cbk" style="left:833px;top:458px" width="15" height="13" viewBox="0 0 15 13"><rect x="1.5" y="0.5" width="12" height="12" rx="1.2" fill="none" stroke="#505553" stroke-width="1.1"/><path d="M2.9 6.2 L5.6 8.6 L11 3.4" fill="none" stroke="#505553" stroke-width="1.1"/></svg>
<svg class="cbk" style="left:857px;top:458px" width="15" height="13" viewBox="0 0 15 13"><rect x="1.5" y="0.5" width="12" height="12" rx="1.2" fill="none" stroke="#505553" stroke-width="1.1"/><path d="M2.9 6.2 L5.6 8.6 L11 3.4" fill="none" stroke="#505553" stroke-width="1.1"/></svg>
<svg class="cbk" style="left:881px;top:458px" width="15" height="13" viewBox="0 0 15 13"><rect x="1.5" y="0.5" width="12" height="12" rx="1.2" fill="none" stroke="#505553" stroke-width="1.1"/><path d="M2.9 6.2 L5.6 8.6 L11 3.4" fill="none" stroke="#505553" stroke-width="1.1"/></svg>
<svg class="cbk" style="left:905px;top:458px" width="15" height="13" viewBox="0 0 15 13"><rect x="1.5" y="0.5" width="12" height="12" rx="1.2" fill="none" stroke="#505553" stroke-width="1.1"/><path d="M2.9 6.2 L5.6 8.6 L11 3.4" fill="none" stroke="#505553" stroke-width="1.1"/></svg>
<svg class="cbk" style="left:929px;top:458px" width="15" height="13" viewBox="0 0 15 13"><rect x="1.5" y="0.5" width="12" height="12" rx="1.2" fill="none" stroke="#505553" stroke-width="1.1"/><path d="M2.9 6.2 L5.6 8.6 L11 3.4" fill="none" stroke="#505553" stroke-width="1.1"/></svg>
<div class="cell" style="left:20px;top:476px;width:272px;height:19px;background:#f4f4f4"></div>
<div class="cell" style="left:293px;top:476px;width:30px;height:19px;background:#f4f4f4"></div>
<div class="cell" style="left:324px;top:476px;width:67px;height:19px;background:#e8f1ee"></div>
<div class="cell" style="left:392px;top:476px;width:66px;height:19px;background:#e8f1ee"></div>
<div class="cell" style="left:459px;top:476px;width:66px;height:19px;background:#e8f1ee"></div>
<div class="cell" style="left:526px;top:476px;width:133px;height:19px;background:#e8f1ee"></div>
<div class="cell" style="left:660px;top:476px;width:23px;height:19px;background:#e8f1ee"></div>
<div class="cell" style="left:684px;top:476px;width:23px;height:19px;background:#e8f1ee"></div>
<div class="cell" style="left:708px;top:476px;width:23px;height:19px;background:#e8f1ee"></div>
<div class="cell" style="left:732px;top:476px;width:23px;height:19px;background:#e8f1ee"></div>
<div class="cell" style="left:756px;top:476px;width:23px;height:19px;background:#e8f1ee"></div>
<div class="cell" style="left:780px;top:476px;width:23px;height:19px;background:#e8f1ee"></div>
<div class="cell" style="left:804px;top:476px;width:23px;height:19px;background:#e8f1ee"></div>
<div class="cell" style="left:828px;top:476px;width:23px;height:19px;background:#e8f1ee"></div>
<div class="cell" style="left:852px;top:476px;width:23px;height:19px;background:#e8f1ee"></div>
<div class="cell" style="left:876px;top:476px;width:23px;height:19px;background:#e8f1ee"></div>
<div class="cell" style="left:900px;top:476px;width:23px;height:19px;background:#e8f1ee"></div>
<div class="cell" style="left:924px;top:476px;width:23px;height:19px;background:#e8f1ee"></div>
<div class="lbl" style="left:40px;top:479px">Extra4</div>
<svg class="cbk" style="left:351px;top:478px" width="15" height="13" viewBox="0 0 15 13"><rect x="1.5" y="0.5" width="12" height="12" rx="1.2" fill="none" stroke="#505553" stroke-width="1.1"/><path d="M2.9 6.2 L5.6 8.6 L11 3.4" fill="none" stroke="#505553" stroke-width="1.1"/></svg>
<svg class="cbk" style="left:419px;top:478px" width="15" height="13" viewBox="0 0 15 13"><rect x="1.5" y="0.5" width="12" height="12" rx="1.2" fill="none" stroke="#505553" stroke-width="1.1"/></svg>
<svg class="cbk" style="left:486px;top:478px" width="15" height="13" viewBox="0 0 15 13"><rect x="1.5" y="0.5" width="12" height="12" rx="1.2" fill="none" stroke="#505553" stroke-width="1.1"/></svg>
<div class="abs" style="left:528px;top:479.0px;font-size:11.5px;letter-spacing:0.35px;color:#666;white-space:nowrap">Total</div>
<svg class="cbk" style="left:665px;top:478px" width="15" height="13" viewBox="0 0 15 13"><rect x="1.5" y="0.5" width="12" height="12" rx="1.2" fill="none" stroke="#505553" stroke-width="1.1"/><path d="M2.9 6.2 L5.6 8.6 L11 3.4" fill="none" stroke="#505553" stroke-width="1.1"/></svg>
<svg class="cbk" style="left:689px;top:478px" width="15" height="13" viewBox="0 0 15 13"><rect x="1.5" y="0.5" width="12" height="12" rx="1.2" fill="none" stroke="#505553" stroke-width="1.1"/><path d="M2.9 6.2 L5.6 8.6 L11 3.4" fill="none" stroke="#505553" stroke-width="1.1"/></svg>
<svg class="cbk" style="left:713px;top:478px" width="15" height="13" viewBox="0 0 15 13"><rect x="1.5" y="0.5" width="12" height="12" rx="1.2" fill="none" stroke="#505553" stroke-width="1.1"/><path d="M2.9 6.2 L5.6 8.6 L11 3.4" fill="none" stroke="#505553" stroke-width="1.1"/></svg>
<svg class="cbk" style="left:737px;top:478px" width="15" height="13" viewBox="0 0 15 13"><rect x="1.5" y="0.5" width="12" height="12" rx="1.2" fill="none" stroke="#505553" stroke-width="1.1"/><path d="M2.9 6.2 L5.6 8.6 L11 3.4" fill="none" stroke="#505553" stroke-width="1.1"/></svg>
<svg class="cbk" style="left:761px;top:478px" width="15" height="13" viewBox="0 0 15 13"><rect x="1.5" y="0.5" width="12" height="12" rx="1.2" fill="none" stroke="#505553" stroke-width="1.1"/><path d="M2.9 6.2 L5.6 8.6 L11 3.4" fill="none" stroke="#505553" stroke-width="1.1"/></svg>
<svg class="cbk" style="left:785px;top:478px" width="15" height="13" viewBox="0 0 15 13"><rect x="1.5" y="0.5" width="12" height="12" rx="1.2" fill="none" stroke="#505553" stroke-width="1.1"/><path d="M2.9 6.2 L5.6 8.6 L11 3.4" fill="none" stroke="#505553" stroke-width="1.1"/></svg>
<svg class="cbk" style="left:809px;top:478px" width="15" height="13" viewBox="0 0 15 13"><rect x="1.5" y="0.5" width="12" height="12" rx="1.2" fill="none" stroke="#505553" stroke-width="1.1"/><path d="M2.9 6.2 L5.6 8.6 L11 3.4" fill="none" stroke="#505553" stroke-width="1.1"/></svg>
<svg class="cbk" style="left:833px;top:478px" width="15" height="13" viewBox="0 0 15 13"><rect x="1.5" y="0.5" width="12" height="12" rx="1.2" fill="none" stroke="#505553" stroke-width="1.1"/><path d="M2.9 6.2 L5.6 8.6 L11 3.4" fill="none" stroke="#505553" stroke-width="1.1"/></svg>
<svg class="cbk" style="left:857px;top:478px" width="15" height="13" viewBox="0 0 15 13"><rect x="1.5" y="0.5" width="12" height="12" rx="1.2" fill="none" stroke="#505553" stroke-width="1.1"/><path d="M2.9 6.2 L5.6 8.6 L11 3.4" fill="none" stroke="#505553" stroke-width="1.1"/></svg>
<svg class="cbk" style="left:881px;top:478px" width="15" height="13" viewBox="0 0 15 13"><rect x="1.5" y="0.5" width="12" height="12" rx="1.2" fill="none" stroke="#505553" stroke-width="1.1"/><path d="M2.9 6.2 L5.6 8.6 L11 3.4" fill="none" stroke="#505553" stroke-width="1.1"/></svg>
<svg class="cbk" style="left:905px;top:478px" width="15" height="13" viewBox="0 0 15 13"><rect x="1.5" y="0.5" width="12" height="12" rx="1.2" fill="none" stroke="#505553" stroke-width="1.1"/><path d="M2.9 6.2 L5.6 8.6 L11 3.4" fill="none" stroke="#505553" stroke-width="1.1"/></svg>
<svg class="cbk" style="left:929px;top:478px" width="15" height="13" viewBox="0 0 15 13"><rect x="1.5" y="0.5" width="12" height="12" rx="1.2" fill="none" stroke="#505553" stroke-width="1.1"/><path d="M2.9 6.2 L5.6 8.6 L11 3.4" fill="none" stroke="#505553" stroke-width="1.1"/></svg>
<div class="cell" style="left:20px;top:496px;width:272px;height:19px;background:#efefef"></div>
<div class="cell" style="left:293px;top:496px;width:30px;height:19px;background:#efefef"></div>
<div class="cell" style="left:324px;top:496px;width:67px;height:19px;background:#d5e4da"></div>
<div class="cell" style="left:392px;top:496px;width:66px;height:19px;background:#d5e4da"></div>
<div class="cell" style="left:459px;top:496px;width:66px;height:19px;background:#d5e4da"></div>
<div class="cell" style="left:526px;top:496px;width:133px;height:19px;background:#d5e4da"></div>
<div class="cell" style="left:660px;top:496px;width:23px;height:19px;background:#d5e4da"></div>
<div class="cell" style="left:684px;top:496px;width:23px;height:19px;background:#d5e4da"></div>
<div class="cell" style="left:708px;top:496px;width:23px;height:19px;background:#d5e4da"></div>
<div class="cell" style="left:732px;top:496px;width:23px;height:19px;background:#d5e4da"></div>
<div class="cell" style="left:756px;top:496px;width:23px;height:19px;background:#d5e4da"></div>
<div class="cell" style="left:780px;top:496px;width:23px;height:19px;background:#d5e4da"></div>
<div class="cell" style="left:804px;top:496px;width:23px;height:19px;background:#d5e4da"></div>
<div class="cell" style="left:828px;top:496px;width:23px;height:19px;background:#d5e4da"></div>
<div class="cell" style="left:852px;top:496px;width:23px;height:19px;background:#d5e4da"></div>
<div class="cell" style="left:876px;top:496px;width:23px;height:19px;background:#d5e4da"></div>
<div class="cell" style="left:900px;top:496px;width:23px;height:19px;background:#d5e4da"></div>
<div class="cell" style="left:924px;top:496px;width:23px;height:19px;background:#d5e4da"></div>
<div class="lbl" style="left:40px;top:499px">Extra5</div>
<svg class="cbk" style="left:351px;top:498px" width="15" height="13" viewBox="0 0 15 13"><rect x="1.5" y="0.5" width="12" height="12" rx="1.2" fill="none" stroke="#505553" stroke-width="1.1"/><path d="M2.9 6.2 L5.6 8.6 L11 3.4" fill="none" stroke="#505553" stroke-width="1.1"/></svg>
<svg class="cbk" style="left:419px;top:498px" width="15" height="13" viewBox="0 0 15 13"><rect x="1.5" y="0.5" width="12" height="12" rx="1.2" fill="none" stroke="#505553" stroke-width="1.1"/></svg>
<svg class="cbk" style="left:486px;top:498px" width="15" height="13" viewBox="0 0 15 13"><rect x="1.5" y="0.5" width="12" height="12" rx="1.2" fill="none" stroke="#505553" stroke-width="1.1"/></svg>
<div class="abs" style="left:528px;top:499.0px;font-size:11.5px;letter-spacing:0.35px;color:#666;white-space:nowrap">Total</div>
<svg class="cbk" style="left:665px;top:498px" width="15" height="13" viewBox="0 0 15 13"><rect x="1.5" y="0.5" width="12" height="12" rx="1.2" fill="none" stroke="#505553" stroke-width="1.1"/><path d="M2.9 6.2 L5.6 8.6 L11 3.4" fill="none" stroke="#505553" stroke-width="1.1"/></svg>
<svg class="cbk" style="left:689px;top:498px" width="15" height="13" viewBox="0 0 15 13"><rect x="1.5" y="0.5" width="12" height="12" rx="1.2" fill="none" stroke="#505553" stroke-width="1.1"/><path d="M2.9 6.2 L5.6 8.6 L11 3.4" fill="none" stroke="#505553" stroke-width="1.1"/></svg>
<svg class="cbk" style="left:713px;top:498px" width="15" height="13" viewBox="0 0 15 13"><rect x="1.5" y="0.5" width="12" height="12" rx="1.2" fill="none" stroke="#505553" stroke-width="1.1"/><path d="M2.9 6.2 L5.6 8.6 L11 3.4" fill="none" stroke="#505553" stroke-width="1.1"/></svg>
<svg class="cbk" style="left:737px;top:498px" width="15" height="13" viewBox="0 0 15 13"><rect x="1.5" y="0.5" width="12" height="12" rx="1.2" fill="none" stroke="#505553" stroke-width="1.1"/><path d="M2.9 6.2 L5.6 8.6 L11 3.4" fill="none" stroke="#505553" stroke-width="1.1"/></svg>
<svg class="cbk" style="left:761px;top:498px" width="15" height="13" viewBox="0 0 15 13"><rect x="1.5" y="0.5" width="12" height="12" rx="1.2" fill="none" stroke="#505553" stroke-width="1.1"/><path d="M2.9 6.2 L5.6 8.6 L11 3.4" fill="none" stroke="#505553" stroke-width="1.1"/></svg>
<svg class="cbk" style="left:785px;top:498px" width="15" height="13" viewBox="0 0 15 13"><rect x="1.5" y="0.5" width="12" height="12" rx="1.2" fill="none" stroke="#505553" stroke-width="1.1"/><path d="M2.9 6.2 L5.6 8.6 L11 3.4" fill="none" stroke="#505553" stroke-width="1.1"/></svg>
<svg class="cbk" style="left:809px;top:498px" width="15" height="13" viewBox="0 0 15 13"><rect x="1.5" y="0.5" width="12" height="12" rx="1.2" fill="none" stroke="#505553" stroke-width="1.1"/><path d="M2.9 6.2 L5.6 8.6 L11 3.4" fill="none" stroke="#505553" stroke-width="1.1"/></svg>
<svg class="cbk" style="left:833px;top:498px" width="15" height="13" viewBox="0 0 15 13"><rect x="1.5" y="0.5" width="12" height="12" rx="1.2" fill="none" stroke="#505553" stroke-width="1.1"/><path d="M2.9 6.2 L5.6 8.6 L11 3.4" fill="none" stroke="#505553" stroke-width="1.1"/></svg>
<svg class="cbk" style="left:857px;top:498px" width="15" height="13" viewBox="0 0 15 13"><rect x="1.5" y="0.5" width="12" height="12" rx="1.2" fill="none" stroke="#505553" stroke-width="1.1"/><path d="M2.9 6.2 L5.6 8.6 L11 3.4" fill="none" stroke="#505553" stroke-width="1.1"/></svg>
<svg class="cbk" style="left:881px;top:498px" width="15" height="13" viewBox="0 0 15 13"><rect x="1.5" y="0.5" width="12" height="12" rx="1.2" fill="none" stroke="#505553" stroke-width="1.1"/><path d="M2.9 6.2 L5.6 8.6 L11 3.4" fill="none" stroke="#505553" stroke-width="1.1"/></svg>
<svg class="cbk" style="left:905px;top:498px" width="15" height="13" viewBox="0 0 15 13"><rect x="1.5" y="0.5" width="12" height="12" rx="1.2" fill="none" stroke="#505553" stroke-width="1.1"/><path d="M2.9 6.2 L5.6 8.6 L11 3.4" fill="none" stroke="#505553" stroke-width="1.1"/></svg>
<svg class="cbk" style="left:929px;top:498px" width="15" height="13" viewBox="0 0 15 13"><rect x="1.5" y="0.5" width="12" height="12" rx="1.2" fill="none" stroke="#505553" stroke-width="1.1"/><path d="M2.9 6.2 L5.6 8.6 L11 3.4" fill="none" stroke="#505553" stroke-width="1.1"/></svg>
<div class="abs" style="left:17px;top:532px;width:156px;height:25px;background:#5b766f;color:#fff;font-size:12px;letter-spacing:0.3px;text-align:center;line-height:26px">Add staff role</div>
</body></html>
